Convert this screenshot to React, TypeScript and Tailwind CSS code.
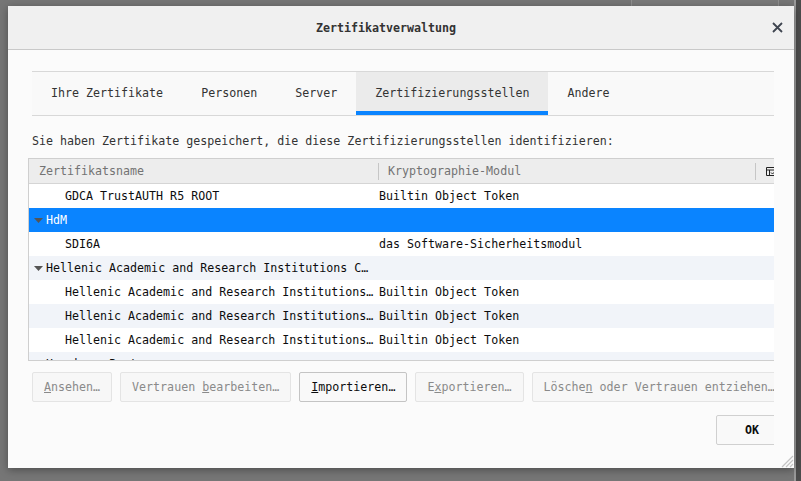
const rows = [
  { name: "GDCA TrustAUTH R5 ROOT", token: "Builtin Object Token", level: 1 },
  { name: "HdM", token: "", level: 0, selected: true },
  { name: "SDI6A", token: "das Software-Sicherheitsmodul", level: 1 },
  { name: "Hellenic Academic and Research Institutions C…", token: "", level: 0 },
  { name: "Hellenic Academic and Research Institutions…", token: "Builtin Object Token", level: 1 },
  { name: "Hellenic Academic and Research Institutions…", token: "Builtin Object Token", level: 1 },
  { name: "Hellenic Academic and Research Institutions…", token: "Builtin Object Token", level: 1 },
  { name: "Hongkong Post", token: "", level: 0 },
];

const tabs = ["Ihre Zertifikate", "Personen", "Server", "Zertifizierungsstellen", "Andere"];

function Twisty() {
  return (
    <svg width="9" height="5" viewBox="0 0 9 5" className="mr-[3px] shrink-0">
      <path d="M0 0 H9 L4.5 5 Z" fill="#555" />
    </svg>
  );
}

function Btn({ disabled, children }: { disabled?: boolean; children: React.ReactNode }) {
  return (
    <div
      className={
        disabled
          ? "flex h-[30px] shrink-0 items-center rounded-[2px] border border-[#e4e4e4] bg-[#f7f7f7] px-[11px] text-[#8a8a8a]"
          : "flex h-[30px] shrink-0 items-center rounded-[2px] border border-[#c4c4c4] bg-[#f9f9f9] px-[11px] text-[#0c0c0d]"
      }
    >
      {children}
    </div>
  );
}

export default function App() {
  return (
    <div className="relative h-[481px] w-[801px] overflow-hidden bg-[#767676] font-['DejaVu_Sans_Mono',monospace] text-[11.65px] leading-4">
      {/* window behind */}
      <div className="absolute left-[631px] top-[-4px] h-[12px] w-[148px] rounded-[2px] border border-[#8f8f8f] bg-[#7a7a7a]" />
      <div className="absolute right-0 top-0 h-[481px] w-[7px] border-l-2 border-[#9a9a9a] bg-[#4c4c4c]" />

      {/* dialog */}
      <div className="absolute left-[8px] top-[6px] flex h-[462px] w-[786px] flex-col bg-[#fbfbfb] shadow-[0_2px_8px_rgba(0,0,0,0.35)]">
        <div className="relative flex h-[44px] shrink-0 items-center justify-center border-b border-[#c9c9c9] bg-[#f0f0f0] pr-[30px]">
          <span className="font-bold text-[#333]">Zertifikatverwaltung</span>
          <svg width="11" height="11" viewBox="0 0 11 11" className="absolute left-[764px] top-[16px]">
            <path d="M1 1 L10 10 M10 1 L1 10" stroke="#3f4550" strokeWidth="1.8" />
          </svg>
        </div>

        <div className="flex-1 pl-[20px] pr-[20px] pt-[21px]">
          <div className="overflow-hidden">
            {/* tabs */}
            <div className="ml-[4px] flex h-[45px] border-y border-[#d8d8d8] bg-[#f9f9f9] text-[#333]">
              {tabs.map((t) => (
                <div
                  key={t}
                  className={
                    t === "Zertifizierungsstellen"
                      ? "flex items-center border-b-4 border-[#0a84ff] bg-[#ebebeb] px-[19px] pt-[3px]"
                      : "flex items-center px-[19px] pb-[1px]"
                  }
                >
                  {t}
                </div>
              ))}
            </div>

            <div className="ml-[4px] mt-[17px] text-[#333]">
              Sie haben Zertifikate gespeichert, die diese Zertifizierungsstellen identifizieren:
            </div>

            {/* tree */}
            <div className="mt-[9px] w-[762px] border border-[#cfcfcf] bg-white text-[#0c0c0d]">
              <div className="flex h-[25px] items-center border-b border-[#d5d5d5] bg-[#ededed] text-[#737373]">
                <div className="w-[349px] pl-[10px]">Zertifikatsname</div>
                <div className="h-[17px] w-px bg-[#c6c6c6]" />
                <div className="w-[376px] pl-[9px]">Kryptographie-Modul</div>
                <div className="h-[17px] w-px bg-[#c6c6c6]" />
                <div className="pl-[10px]">
                  <svg width="9" height="9" viewBox="0 0 9 9">
                    <path d="M0.5 0.5 H8.5 V8.5 H0.5 Z M0.5 3 H8.5 M3.5 3 V8.5 M5 5.5 L6.5 7 L8.5 5" fill="none" stroke="#222" strokeWidth="1" />
                  </svg>
                </div>
              </div>
              <div className="h-[176px] overflow-hidden">
                {rows.map((r, i) => (
                  <div
                    key={i}
                    className={
                      r.selected
                        ? "flex h-6 items-center bg-[#0a84ff] text-white"
                        : i % 2 === 1
                          ? "flex h-6 items-center bg-[#f1f4f9]"
                          : "flex h-6 items-center bg-white"
                    }
                  >
                    <div className={r.level === 0 ? "flex w-[350px] items-center pl-[5px]" : "w-[350px] pl-[36px]"}>
                      {r.level === 0 && <Twisty />}
                      <span className="whitespace-nowrap">{r.name}</span>
                    </div>
                    <div className="whitespace-nowrap">{r.token}</div>
                  </div>
                ))}
              </div>
            </div>

            {/* buttons */}
            <div className="ml-[4px] mt-[11px] flex w-max gap-2">
              <Btn disabled>
                <span className="underline">A</span>nsehen…
              </Btn>
              <Btn disabled>
                Vertrauen&nbsp;<span className="underline">b</span>earbeiten…
              </Btn>
              <Btn>
                <span className="underline">I</span>mportieren…
              </Btn>
              <Btn disabled>
                E<span className="underline">x</span>portieren…
              </Btn>
              <Btn disabled>
                Lösche<span className="underline">n</span>&nbsp;oder Vertrauen entziehen…
              </Btn>
            </div>

            <div className="ml-[4px] mt-[13px] flex w-max pl-[684px]">
              <div className="flex h-[30px] w-[72px] items-center justify-center rounded-[2px] border border-[#d0d0d0] bg-[#f9f9f9] font-bold text-[#0c0c0d]">
                OK
              </div>
            </div>
          </div>
        </div>

        <svg width="14" height="14" viewBox="0 0 14 14" className="absolute bottom-0 right-0">
          <path d="M13 2 L2 13 M13 6 L6 13 M13 10 L10 13" stroke="#c4c4c4" strokeWidth="1.2" />
        </svg>
      </div>
    </div>
  );
}
